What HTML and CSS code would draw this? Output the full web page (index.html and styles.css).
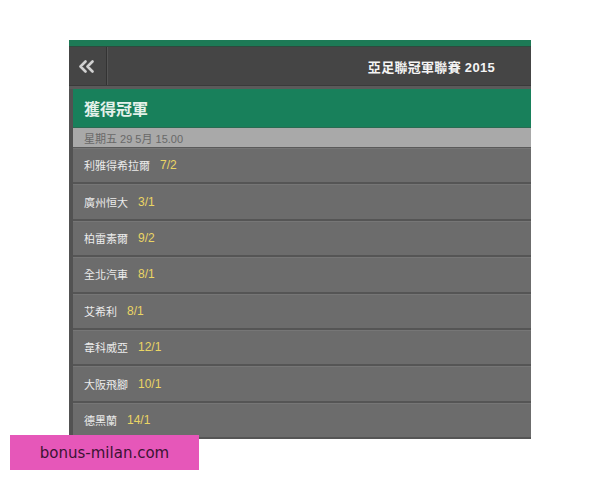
FILE: index.html
```html
<!DOCTYPE html>
<html lang="zh-Hant">
<head>
<meta charset="utf-8">
<link rel="stylesheet" href="styles.css">
</head>
<body>
<div class="frame">
  <div class="topbar"></div>
  <div class="header">
    <div class="back">
      <svg width="17" height="13" viewBox="0 0 17 13"><path d="M7.5 1.5 L2.5 6.5 L7.5 11.5 M14.5 1.5 L9.5 6.5 L14.5 11.5" fill="none" stroke="#d0d0d0" stroke-width="2.6" stroke-linecap="round" stroke-linejoin="round"/></svg>
    </div>
    <div class="league">亞足聯冠軍聯賽 2015</div>
  </div>
  <div class="spacer"></div>
  <div class="content">
    <div class="market">獲得冠軍</div>
    <div class="date">星期五 29 5月 15.00</div>
    <div class="row"><span class="name">利雅得希拉爾</span><span class="odds">7/2</span></div>
    <div class="row"><span class="name">廣州恒大</span><span class="odds">3/1</span></div>
    <div class="row"><span class="name">柏雷素爾</span><span class="odds">9/2</span></div>
    <div class="row"><span class="name">全北汽車</span><span class="odds">8/1</span></div>
    <div class="row"><span class="name">艾希利</span><span class="odds">8/1</span></div>
    <div class="row"><span class="name">韋科威亞</span><span class="odds">12/1</span></div>
    <div class="row"><span class="name">大阪飛腳</span><span class="odds">10/1</span></div>
    <div class="row"><span class="name">德黑蘭</span><span class="odds">14/1</span></div>
  </div>
</div>
<div class="watermark">bonus-milan.com</div>
</body>
</html>
```
FILE: styles.css
```css
html, body {
  margin: 0;
  padding: 0;
  background: #ffffff;
}
body {
  font-family: "Liberation Sans", "Noto Sans CJK TC", sans-serif;
  width: 600px;
  height: 480px;
  overflow: hidden;
  position: relative;
}
.frame {
  margin: 40px 0 0 69px;
  width: 462px;
  background: #565656;
}
.topbar {
  height: 6px;
  background: #1d7a56;
  border-bottom: 1px solid #2e4a3e;
}
.header {
  height: 38px;
  background: #454545;
  display: flex;
  align-items: center;
  border-bottom: 1px solid #3a3a3a;
}
.back {
  width: 37px;
  height: 100%;
  border-right: 1px solid #333333;
  box-shadow: 1px 0 0 #555555;
  display: flex;
  align-items: center;
  justify-content: center;
}
.back svg {
  margin-left: -2px;
}
.league {
  margin-left: auto;
  padding-right: 36px;
  color: #f4f4f4;
  font-family: "Liberation Sans", "Noto Sans CJK TC", sans-serif;
  font-weight: bold;
  font-size: 13px;
  letter-spacing: 0.3px;
}
.spacer {
  height: 3px;
  background: #5a5a5a;
}
.content {
  padding-left: 4px;
  background: #525252;
}
.market {
  height: 38px;
  background: #18805b;
  border-bottom: 1px solid #2a6b52;
  display: flex;
  align-items: center;
  padding-left: 11px;
  color: #e4f1ea;
  font-family: "Noto Sans CJK TC", sans-serif;
  font-weight: bold;
  font-size: 16px;
}
.date {
  height: 19px;
  background: #a9a9a9;
  display: flex;
  align-items: center;
  padding-left: 11px;
  color: #686868;
  font-size: 11px;
  font-family: "Liberation Sans", "Noto Sans CJK TC", sans-serif;
  border-bottom: 1px solid #5a5a5a;
}
.row {
  height: 34.4px;
  background: #6c6c6c;
  border-bottom: 2px solid #555555;
  box-shadow: inset 0 1px 0 #767676;
  display: flex;
  align-items: center;
  padding-left: 11px;
  gap: 10px;
  font-size: 11px;
}
.name {
  color: #ebebeb;
  font-family: "Noto Sans CJK TC", sans-serif;
  font-size: 11px;
}
.odds {
  color: #ead564;
  font-family: "Liberation Sans", sans-serif;
  font-size: 12px;
}
.watermark {
  position: absolute;
  left: 10px;
  top: 435px;
  width: 189px;
  height: 35px;
  background: #e657b9;
  color: #3b1333;
  font-family: "DejaVu Sans", sans-serif;
  font-size: 15px;
  display: flex;
  align-items: center;
  justify-content: center;
}
```
